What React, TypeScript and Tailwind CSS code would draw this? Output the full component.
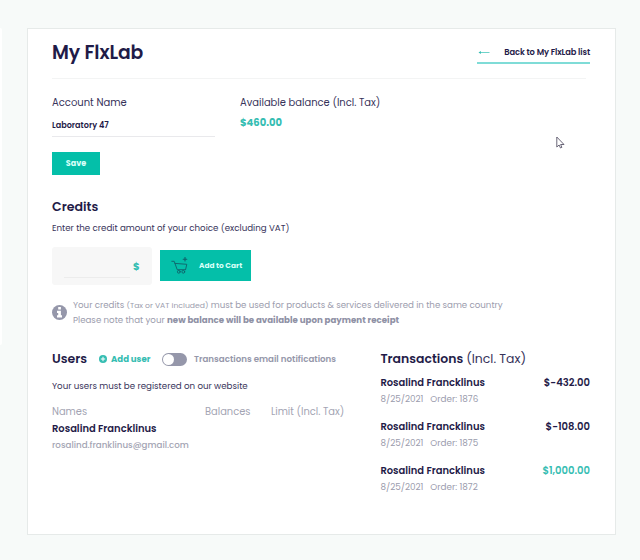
import { useState } from 'react';
import clsx from 'clsx';

const transactions = [
  { order: 1876, name: 'Rosalind Francklinus', date: '8/25/2021', amount: '$-432.00', credit: false },
  { order: 1875, name: 'Rosalind Francklinus', date: '8/25/2021', amount: '$-108.00', credit: false },
  { order: 1872, name: 'Rosalind Francklinus', date: '8/25/2021', amount: '$1,000.00', credit: true },
];

function ArrowLeft() {
  return (
    <svg className="w-[12px] h-[6px]" viewBox="0 0 12 6" fill="none">
      <path d="M11.5 3.5H1.5" stroke="#6fd3ca" strokeWidth="1" />
      <path d="M.5 3.5l2.4-1.6v3.2z" fill="#35bdb2" />
    </svg>
  );
}

function CartIcon() {
  return (
    <svg className="w-[18px] h-[18px]" viewBox="0 0 18 18" fill="none" stroke="#11616a" strokeWidth="0.9" strokeLinecap="round" strokeLinejoin="round">
      <path d="M.8 4.3h2.4l3 8.4h8.2" />
      <path d="M4 6.4l11.8.9-1.2 5.2" />
      <circle cx="7.8" cy="14.8" r="1.4" />
      <circle cx="12.3" cy="14.8" r="1.4" />
      <path d="M14 .4v3.6M12.2 2.2h3.6" strokeWidth="1.1" />
    </svg>
  );
}

function InfoIcon() {
  return (
    <svg className="w-[15px] h-[15px] shrink-0" viewBox="0 0 15 15">
      <circle cx="7.5" cy="7.5" r="7.5" fill="#9597aa" />
      <path d="M6.2 2h2.7v2.5H6.2zM5 5.8h3.9v4.5H10v2.1H5v-2.1h1.2V7.9H5z" fill="#fff" />
    </svg>
  );
}

function PlusIcon() {
  return (
    <svg className="w-[8px] h-[8px]" viewBox="0 0 8 8">
      <circle cx="4" cy="4" r="4" fill="#35bdb2" />
      <path d="M4 1.8v4.4M1.8 4h4.4" stroke="#fff" strokeWidth="1" />
    </svg>
  );
}

function Cursor() {
  return (
    <svg className="absolute left-[556px] top-[136px] w-[9px] h-[13px]" viewBox="0 0 9 13" fill="#fff" stroke="#5a566a" strokeWidth="0.9">
      <path d="M.8 1v10l2.3-2 1.4 3 1.4-.7-1.3-2.8H8z" />
    </svg>
  );
}

export default function App() {
  const [notify, setNotify] = useState(false);

  return (
    <div className="relative flex h-[560px] w-[640px] overflow-hidden bg-[#f7faf9] font-[Poppins,Inter,sans-serif] text-[#1f1b48] whitespace-nowrap">
      {/* Edge of the side menu */}
      <div className="mt-[28px] h-[317px] w-[2px] rounded-r-[2px] bg-white" />

      <main className="ml-[25px] mt-[28px] h-[507px] w-[589px] border border-[#e6eae9] bg-white pl-[24px] pr-[25px]">
        {/* Header */}
        <header className="mr-[4px] flex h-[50px] justify-between border-b border-[#f3f4f4]">
          <h1 className="pt-[12px] text-[18.8px] leading-[24px] font-semibold tracking-[-0.1px]">My FlxLab</h1>
          <a className="-mr-[4px] mt-[12px] flex h-[23px] w-[113px] items-center justify-between border-b-2 border-[#7fdcd7] pl-[1px]">
            <ArrowLeft />
            <span className="pt-[1px] text-[8.3px] font-semibold tracking-[-0.12px]">Back to My FlxLab list</span>
          </a>
        </header>

        {/* Account */}
        <section className="flex pt-[14px]">
          <div className="w-[163px]">
            <div className="text-[10px] leading-[20px] text-[#37335a]">Account Name</div>
            <div className="mt-[2px] h-[22px] border-b border-[#e9e9ec] text-[8.1px] leading-[21px] font-semibold">Laboratory 47</div>
            <button className="mt-[15px] block h-[23px] w-[48px] bg-[#04bfa9] text-[8px] font-bold text-[#d8fff8]">Save</button>
          </div>
          <div className="ml-[25px]">
            <div className="text-[9.95px] leading-[20px] text-[#37335a]">Available balance (Incl. Tax)</div>
            <div className="text-[10px] leading-[20px] font-bold text-[#35bdb2]">$460.00</div>
          </div>
        </section>

        {/* Credits */}
        <section className="mt-[21px]">
          <h2 className="text-[12.6px] leading-[22px] font-semibold">Credits</h2>
          <p className="text-[8.7px] leading-[20px] text-[#37335a]">Enter the credit amount of your choice (excluding VAT)</p>
          <div className="mt-[9px] flex">
            <div className="flex h-[38px] w-[100px] items-center rounded-[3px] bg-[#f7f7f7] pl-[12px]">
              <div className="h-[23px] w-[66px] border-b border-[#ececec]" />
              <span className="ml-[3px] text-[10px] font-bold text-[#35bdb2]">$</span>
            </div>
            <button className="ml-[8px] mt-[3px] flex h-[31px] w-[91px] items-center bg-[#04bfa9] pl-[11px]">
              <CartIcon />
              <span className="ml-[10px] pt-[1px] text-[7.4px] font-bold text-[#d8fff8]">Add to Cart</span>
            </button>
          </div>
          <div className="mt-[13px] flex text-[8.67px] leading-[15px] text-[#9b9cad]">
            <div className="pt-[7px]">
              <InfoIcon />
            </div>
            <div className="ml-[6px]">
              <p>
                Your credits <span className="text-[7.7px]">(Tax or VAT included)</span> must be used for products &amp; services delivered in the same country
              </p>
              <p>
                Please note that your <b className="font-bold text-[#8f91a5]">new balance will be available upon payment receipt</b>
              </p>
            </div>
          </div>
        </section>

        <div className="mt-[21px] flex">
          {/* Users */}
          <section className="w-[329px]">
            <div className="flex h-[20px] items-center">
              <h2 className="w-[47px] pt-[1px] text-[12.5px] font-semibold">Users</h2>
              <PlusIcon />
              <span className="ml-[4px] w-[51px] text-[8.6px] font-bold text-[#35bdb2]">Add user</span>
              <button
                onClick={() => setNotify(!notify)}
                className={clsx('flex h-[13px] w-[25px] items-center rounded-full px-[1px]', notify ? 'justify-end bg-[#04bfa9]' : 'bg-[#9597aa]')}
              >
                <span className="h-[11px] w-[11px] rounded-full bg-white" />
              </button>
              <span className="ml-[7px] text-[8.67px] font-semibold text-[#9597aa]">Transactions email notifications</span>
            </div>
            <p className="mt-[8px] text-[8.7px] leading-[18px] text-[#37335a]">Your users must be registered on our website</p>
            <div className="mt-[8px] flex text-[9.9px] leading-[18px] text-[#a3a4b3]">
              <span className="w-[153px]">Names</span>
              <span className="w-[66px]">Balances</span>
              <span>Limit (Incl. Tax)</span>
            </div>
            <div className="-mt-[1px] text-[9.95px] leading-[17px] font-semibold">Rosalind Francklinus</div>
            <div className="text-[8.7px] leading-[16px] font-medium text-[#a3a4b3]">rosalind.franklinus@gmail.com</div>
          </section>

          {/* Transactions */}
          <section className="w-[210px]">
            <h2 className="text-[12.45px] leading-[20px] font-semibold">
              Transactions <span className="font-normal text-[#37335a]">(Incl. Tax)</span>
            </h2>
            <ul className="mt-[5px]">
              {transactions.map((t) => (
                <li key={t.order} className="flex h-[44px] justify-between">
                  <div>
                    <div className="text-[9.95px] leading-[18px] font-semibold">{t.name}</div>
                    <div className="flex gap-[7px] text-[8.8px] leading-[15px] text-[#9b9cad]">
                      <span>{t.date}</span>
                      <span>Order: {t.order}</span>
                    </div>
                  </div>
                  <span className={clsx('text-[10px] leading-[17px] font-semibold', t.credit && 'text-[#35bdb2]')}>{t.amount}</span>
                </li>
              ))}
            </ul>
          </section>
        </div>
      </main>

      <Cursor />
    </div>
  );
}
